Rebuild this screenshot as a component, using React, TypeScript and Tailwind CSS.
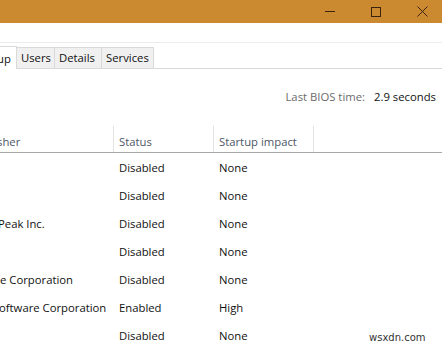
import React from 'react';

const rows = [
    { publisher: '', offset: 0, status: 'Disabled', impact: 'None' },
    { publisher: '', offset: 0, status: 'Disabled', impact: 'None' },
    { publisher: 'Peak Inc.', offset: -2, status: 'Disabled', impact: 'None' },
    { publisher: '', offset: 0, status: 'Disabled', impact: 'None' },
    { publisher: 'e Corporation', offset: 0, status: 'Disabled', impact: 'None' },
    { publisher: 'oftware Corporation', offset: -1, status: 'Enabled', impact: 'High' },
    { publisher: '', offset: 0, status: 'Disabled', impact: 'None' },
];

export default function App() {
    return (
        <div className="relative w-[442px] h-[346px] overflow-hidden bg-white text-[11.3px] text-[#111] [font-family:'Open_Sans','Noto_Sans',sans-serif]">
            {/* title bar */}
            <div className="h-[23px] bg-[#cc8a30] flex justify-end -mr-[3px]">
                <div className="w-[46px] flex items-center justify-center">
                    <div className="w-[10px] h-px bg-[#3a2410]" />
                </div>
                <div className="w-[46px] flex items-center justify-center">
                    <div className="w-[10px] h-[10px] border border-[#3a2410]" />
                </div>
                <div className="w-[46px] flex items-center justify-center">
                    <svg width="11" height="11" viewBox="0 0 11 11">
                        <path d="M0.5 0.5 L10.5 10.5 M10.5 0.5 L0.5 10.5" stroke="#3a2410" strokeWidth="1" fill="none" />
                    </svg>
                </div>
            </div>

            {/* menu area */}
            <div className="h-[20px] border-b border-[#ececec]" />

            {/* tabs */}
            <div className="h-[26px] flex items-end border-b border-[#d9d9d9]">
                <div className="h-[23px] w-[17px] bg-white border-t border-r border-[#d9d9d9] -mb-px flex items-center overflow-hidden">
                    <span className="-ml-[3px] mt-[2px]">up</span>
                </div>
                <div className="h-[21px] w-[38px] bg-[#f0f0f0] border-t border-r border-[#d9d9d9] flex items-center pl-[4px] pt-[1px]">Users</div>
                <div className="h-[21px] w-[47px] bg-[#f0f0f0] border-t border-r border-[#d9d9d9] flex items-center pl-[4px] pt-[1px]">Details</div>
                <div className="h-[21px] w-[52px] bg-[#f0f0f0] border-t border-r border-[#d9d9d9] flex items-center pl-[4px] pt-[1px]">Services</div>
            </div>

            {/* BIOS time */}
            <div className="h-[57px] flex justify-end items-start pt-[20px] pr-[6px]">
                <span className="text-[#6b6b6b]">Last BIOS time:</span>
                <span className="ml-[9px] text-[#111]">2.9 seconds</span>
            </div>

            {/* column header */}
            <div className="h-[27px] flex border-b border-[#a8a8a8] text-[#4d5666]">
                <div className="w-[113px] flex items-center overflow-hidden pt-[6px]">
                    <span className="-ml-[3px]">sher</span>
                </div>
                <div className="w-[100px] border-l border-[#e3e3e3] flex items-center pl-[5px] pt-[6px]">Status</div>
                <div className="w-[100px] border-l border-[#e3e3e3] flex items-center pl-[5px] pt-[6px]">Startup impact</div>
                <div className="flex-1 border-l border-[#e3e3e3]" />
            </div>

            {/* rows */}
            {rows.map((r, i) => (
                <div key={i} className="h-[28px] flex items-center pt-[2px]">
                    <div className="w-[113px] overflow-hidden whitespace-nowrap">
                        <span className="inline-block" style={{ marginLeft: r.offset }}>{r.publisher}</span>
                    </div>
                    <div className="w-[100px] pl-[6px]">{r.status}</div>
                    <div className="w-[100px] pl-[6px]">{r.impact}</div>
                </div>
            ))}

            <div className="absolute left-[369px] top-[330px] text-[10px] text-[#333] [font-family:'DejaVu_Sans',sans-serif]">wsxdn.com</div>
        </div>
    );
}
